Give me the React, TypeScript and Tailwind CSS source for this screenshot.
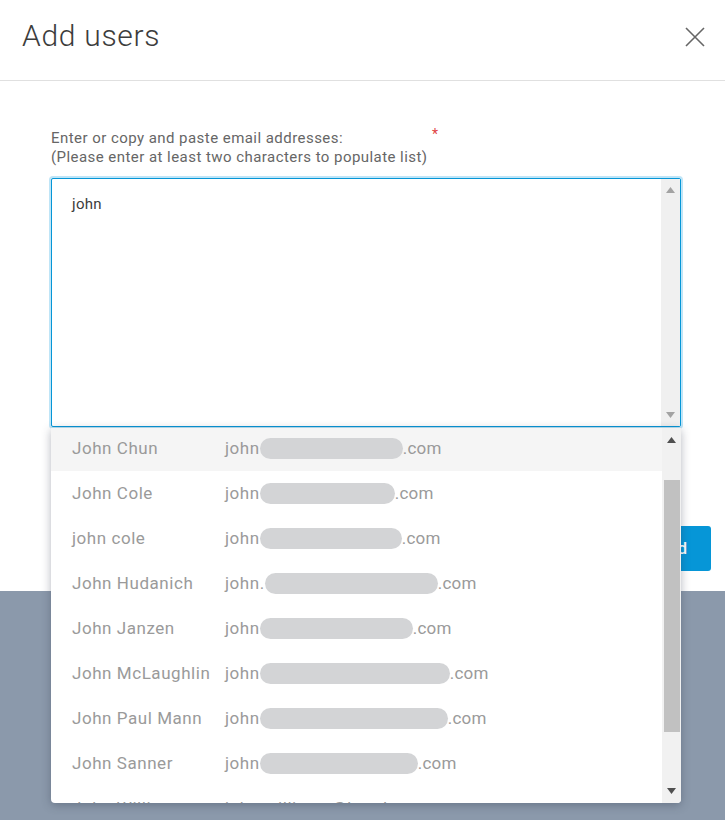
import React from "react";

const rows: { name: string; pre: string; pill: number; post: string }[] = [
  { name: "John Chun", pre: "john", pill: 143, post: ".com" },
  { name: "John Cole", pre: "john", pill: 135, post: ".com" },
  { name: "john cole", pre: "john", pill: 142, post: ".com" },
  { name: "John Hudanich", pre: "john.", pill: 173, post: ".com" },
  { name: "John Janzen", pre: "john", pill: 153, post: ".com" },
  { name: "John McLaughlin", pre: "john", pill: 190, post: ".com" },
  { name: "John Paul Mann", pre: "john", pill: 188, post: ".com" },
  { name: "John Sanner", pre: "john", pill: 158, post: ".com" },
];

function Arrow({ up, color }: { up: boolean; color: string }) {
  return (
    <svg width="9" height="6" viewBox="0 0 9 6">
      {up ? (
        <polygon points="0,6 4.5,0 9,6" fill={color} />
      ) : (
        <polygon points="0,0 4.5,6 9,0" fill={color} />
      )}
    </svg>
  );
}

export default function App() {
  return (
    <div
      className="relative w-[725px] h-[820px] overflow-hidden bg-[#8b99ab]"
      style={{ fontFamily: "Roboto, 'Noto Sans', sans-serif" }}
    >
      <div className="bg-white h-[591px] flex flex-col">
        <div className="h-[81px] border-b border-[#e0e0e0] flex items-center justify-between pl-[22px] pr-[20px] shrink-0">
          <div className="text-[30px] font-light text-[#3c3c3c] tracking-[0.7px] leading-none -mt-[8px]">
            Add users
          </div>
          <svg width="20" height="20" viewBox="0 0 20 20" className="-mt-[6px]">
            <path d="M1 1 L19 19 M19 1 L1 19" stroke="#666" strokeWidth="1.6" />
          </svg>
        </div>
        <div className="px-[51px] pt-[48px] flex-1 flex flex-col">
          <div className="relative text-[15px] leading-[19px] text-[#666] tracking-[0.45px]">
            <div>Enter or copy and paste email addresses:</div>
            <div>(Please enter at least two characters to populate list)</div>
            <span className="absolute left-[381px] -top-[4px] text-[#e04343] text-[14px]">*</span>
          </div>
          <div className="mt-[11px] h-[249px] w-[630px] border border-[#0696d7] rounded-[2px] shadow-[0_0_0_2px_#bfe5f7] flex bg-white">
            <div className="flex-1 pl-[20px] pt-[14px] text-[15px] text-[#3c3c3c] tracking-[0.3px]">john</div>
            <div className="w-[19px] bg-[#f0f0f0] flex flex-col items-center justify-between py-[8px]">
              <Arrow up color="#a3a3a3" />
              <Arrow up={false} color="#a3a3a3" />
            </div>
          </div>
          <div className="flex justify-end mt-[99px] -mr-[37px]">
            <button className="h-[45px] px-[24px] bg-[#0696d7] text-white text-[17px] font-medium rounded-[3px]">
              Add
            </button>
          </div>
        </div>
      </div>

      <div className="absolute left-[51px] top-[428px] w-[630px] h-[375px] bg-white rounded-b-[4px] shadow-[0_2px_10px_rgba(40,50,70,0.35)] flex overflow-hidden">
        <div className="flex-1 overflow-hidden">
          <div className="-mt-[2px]">
            {rows.map((r, i) => (
              <div
                key={i}
                className={`h-[45px] flex items-center pl-[21px] text-[17px] tracking-[0.55px] text-[#9a9a9a] ${
                  i === 0 ? "bg-[#f5f5f5]" : ""
                }`}
              >
                <div className="w-[153px] shrink-0 whitespace-nowrap">{r.name}</div>
                <div className="flex items-center whitespace-nowrap">
                  <span>{r.pre}</span>
                  <span
                    className="inline-block h-[21px] rounded-full bg-[#d3d4d6]"
                    style={{ width: r.pill }}
                  />
                  <span className="tracking-[0.2px]">{r.post}</span>
                </div>
              </div>
            ))}
            <div className="h-[45px] flex items-center pl-[21px] text-[17px] tracking-[0.55px] text-[#9a9a9a]">
              <div className="w-[153px] shrink-0 whitespace-nowrap">John Williams</div>
              <div className="whitespace-nowrap">john.williams@bentley.com</div>
            </div>
          </div>
        </div>
        <div className="w-[19px] bg-[#f1f1f1] flex flex-col items-center py-[9px]">
          <Arrow up color="#505050" />
          <div className="w-[16px] h-[252px] bg-[#c1c1c1] mt-[37px]" />
          <div className="flex-1" />
          <Arrow up={false} color="#505050" />
        </div>
      </div>
    </div>
  );
}
